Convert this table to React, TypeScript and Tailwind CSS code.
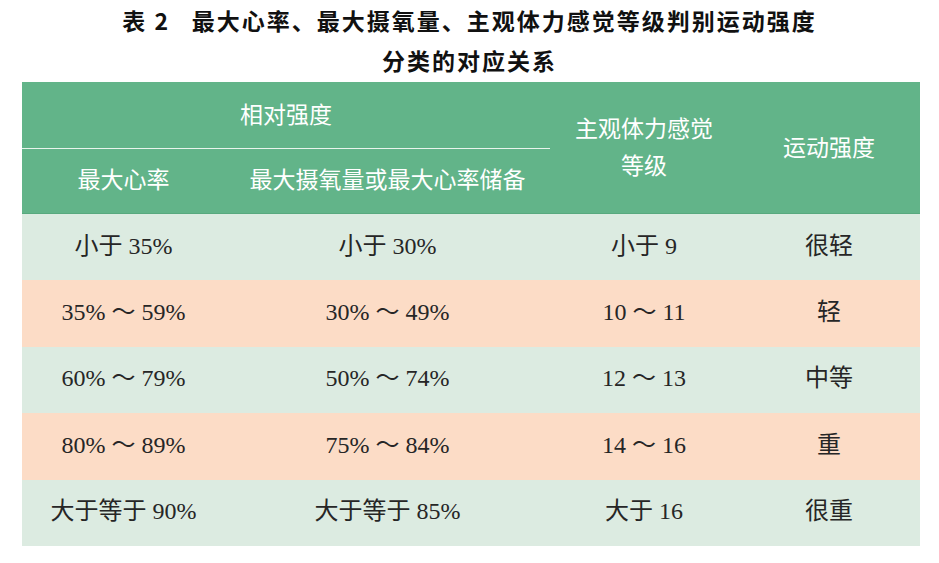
const rows = [
  { hr: "小于 35%", vo2: "小于 30%", rpe: "小于 9", level: "很轻" },
  { hr: "35% ～ 59%", vo2: "30% ～ 49%", rpe: "10 ～ 11", level: "轻" },
  { hr: "60% ～ 79%", vo2: "50% ～ 74%", rpe: "12 ～ 13", level: "中等" },
  { hr: "80% ～ 89%", vo2: "75% ～ 84%", rpe: "14 ～ 16", level: "重" },
  { hr: "大于等于 90%", vo2: "大于等于 85%", rpe: "大于 16", level: "很重" },
];

const sans = "font-['Noto_Sans_CJK_SC',sans-serif]";
const serif = "font-['Liberation_Serif','Noto_Sans_CJK_SC',serif]";

export default function App() {
  return (
    <div className="w-[939px] h-[563px] bg-white overflow-hidden">
      {/* 标题 */}
      <div className={`${sans} font-bold text-[23px] text-[#111] text-center leading-[40px]`}>
        <div className="tracking-[2px]">表 2&nbsp;&nbsp;&nbsp;最大心率、最大摄氧量、主观体力感觉等级判别运动强度</div>
        <div className="tracking-[2px]">分类的对应关系</div>
      </div>

      <div className="ml-[22px] mt-[2px] w-[898px]">
        {/* 表头 */}
        <div className={`${sans} flex bg-[#62b489] text-white text-[23px] h-[132px] border-b border-[#58a97e]`}>
          <div className="w-[528px] flex flex-col">
            <div className="h-[67px] pb-[4px] flex items-center justify-center border-b border-[#e8f4ec]">相对强度</div>
            <div className="flex flex-1 pb-[6px]">
              <div className="w-[203px] flex items-center justify-center">最大心率</div>
              <div className="flex-1 flex items-center justify-center">最大摄氧量或最大心率储备</div>
            </div>
          </div>
          <div className="w-[188px] flex flex-col items-center justify-center leading-[37px] pb-[4px]">
            <div>主观体力感觉</div>
            <div>等级</div>
          </div>
          <div className="flex-1 flex items-center justify-center pb-[2px]">运动强度</div>
        </div>

        {/* 数据行 */}
        {rows.map((r, i) => (
          <div
            key={i}
            className={`${serif} flex text-[24px] text-[#262626] h-[66.4px] pb-[3px] ${i % 2 === 0 ? "bg-[#dcebe1]" : "bg-[#fcdcc6]"}`}
          >
            <div className="w-[203px] flex items-center justify-center">{r.hr}</div>
            <div className="w-[325px] flex items-center justify-center">{r.vo2}</div>
            <div className="w-[188px] flex items-center justify-center">{r.rpe}</div>
            <div className="flex-1 flex items-center justify-center">{r.level}</div>
          </div>
        ))}
      </div>
    </div>
  );
}
